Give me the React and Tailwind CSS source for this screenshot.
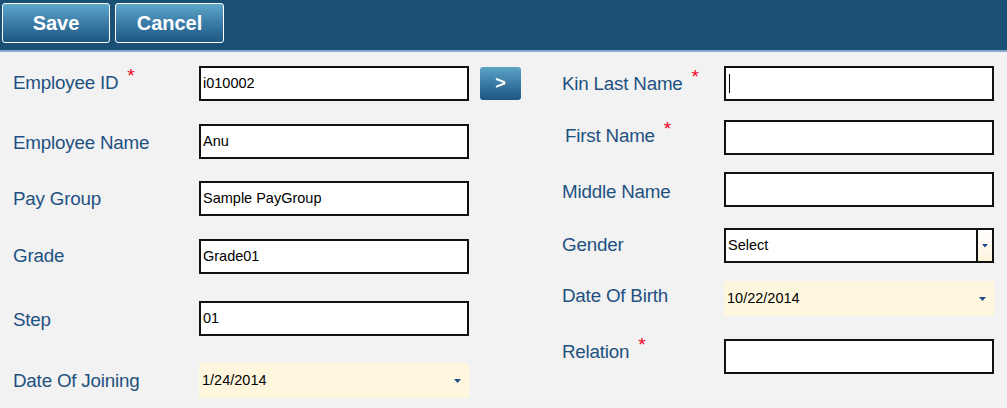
import React from "react";

const font = { fontFamily: '"Liberation Sans", Arial, sans-serif' };

function Star() {
  return <span className="ml-[9px] text-[#f0001c] text-[19px] leading-none relative top-[-7px]">*</span>;
}

function Label({ children, req, cls = "" }) {
  return (
    <div className={"text-[18.8px] text-[#1e5181] leading-none tracking-[-0.2px] " + cls}>
      {children}
      {req && <Star />}
    </div>
  );
}

function TextBox({ value, cursor }) {
  return (
    <div className="w-[270px] h-[35px] bg-white border-2 border-[#111] flex items-center pl-[2px] text-[14.5px] text-black">
      {cursor && <span className="w-px h-[19px] bg-black ml-[1px]" />}
      {value}
    </div>
  );
}

function DateBox({ value }) {
  return (
    <div className="w-[270px] h-[35px] bg-[#fff7dd] flex items-center justify-between pl-[3px] pr-[8px] text-[14.5px] text-black">
      <span>{value}</span>
      <svg width="7" height="4" viewBox="0 0 7 4"><path d="M0 0h7L3.5 4z" fill="#1e4d86" /></svg>
    </div>
  );
}

function SelectBox() {
  return (
    <div className="w-[270px] h-[35px] bg-white border-2 border-[#111] flex items-stretch text-[14.5px] text-black">
      <div className="flex-1 flex items-center pl-[2px]">Select</div>
      <div className="w-[16px] border-l-2 border-[#111] bg-gradient-to-b from-white to-[#fff5dc] flex items-center justify-center">
        <svg width="6" height="4" viewBox="0 0 6 4"><path d="M0 0h6L3 3.5z" fill="#1e4d86" /></svg>
      </div>
    </div>
  );
}

function Btn({ children, w }) {
  return (
    <button
      className={"h-[40px] rounded-[3px] border border-white text-white font-bold text-[20px] bg-gradient-to-b from-[#5ea7c9] via-[#3b7ca8] to-[#1d5883] " + w}
      style={font}
    >
      {children}
    </button>
  );
}

function Row({ mt, label, children }) {
  return (
    <div className={"flex items-center " + mt}>
      <div className="w-[186px] shrink-0">{label}</div>
      {children}
    </div>
  );
}

function RRow({ mt, label, children }) {
  return (
    <div className={"flex items-center " + mt}>
      <div className="w-[162px] shrink-0">{label}</div>
      {children}
    </div>
  );
}

export default function App() {
  return (
    <div className="w-[1007px] h-[408px] bg-[#f2f2f2] overflow-hidden" style={font}>
      <div className="h-[50px] bg-[#1a4f76] flex items-start gap-[5px] pl-[2px] pt-[3px]">
        <Btn w="w-[108px]">Save</Btn>
        <Btn w="w-[109px]">Cancel</Btn>
      </div>
      <div className="h-[2px] bg-[#86a9cb]" />
      <div className="flex">
        <div className="pl-[13px] w-[549px] flex flex-col">
          <Row mt="mt-[14px]" label={<Label req cls="relative top-[-1px]">Employee ID</Label>}>
            <TextBox value="i010002" />
            <button className="ml-[11px] w-[41px] h-[33px] rounded-[3px] bg-gradient-to-b from-[#5ca3c6] via-[#3a7aa5] to-[#1d5782] text-white text-[18px] font-bold">&gt;</button>
          </Row>
          <Row mt="mt-[23px]" label={<Label cls="relative top-[2px]">Employee Name</Label>}>
            <TextBox value="Anu" />
          </Row>
          <Row mt="mt-[22px]" label={<Label cls="relative top-[1px]">Pay Group</Label>}>
            <TextBox value="Sample PayGroup" />
          </Row>
          <Row mt="mt-[23px]" label={<Label>Grade</Label>}>
            <TextBox value="Grade01" />
          </Row>
          <Row mt="mt-[27px]" label={<Label cls="relative top-[2px]">Step</Label>}>
            <TextBox value="01" />
          </Row>
          <Row mt="mt-[27px]" label={<Label cls="relative top-[1px]">Date Of Joining</Label>}>
            <DateBox value="1/24/2014" />
          </Row>
        </div>
        <div className="pl-[13px] flex flex-col">
          <RRow mt="mt-[14px]" label={<Label req>Kin Last Name</Label>}>
            <TextBox cursor />
          </RRow>
          <RRow mt="mt-[19px]" label={<Label req cls="ml-[3px] relative top-[-2px]">First Name</Label>}>
            <TextBox />
          </RRow>
          <RRow mt="mt-[17px]" label={<Label cls="relative top-[3px]">Middle Name</Label>}>
            <TextBox />
          </RRow>
          <RRow mt="mt-[21px]" label={<Label>Gender</Label>}>
            <SelectBox />
          </RRow>
          <RRow mt="mt-[18px]" label={<Label cls="relative top-[-2px]">Date Of Birth</Label>}>
            <DateBox value="10/22/2014" />
          </RRow>
          <RRow mt="mt-[23px]" label={<Label req cls="relative top-[-5px]">Relation</Label>}>
            <TextBox />
          </RRow>
        </div>
      </div>
    </div>
  );
}
